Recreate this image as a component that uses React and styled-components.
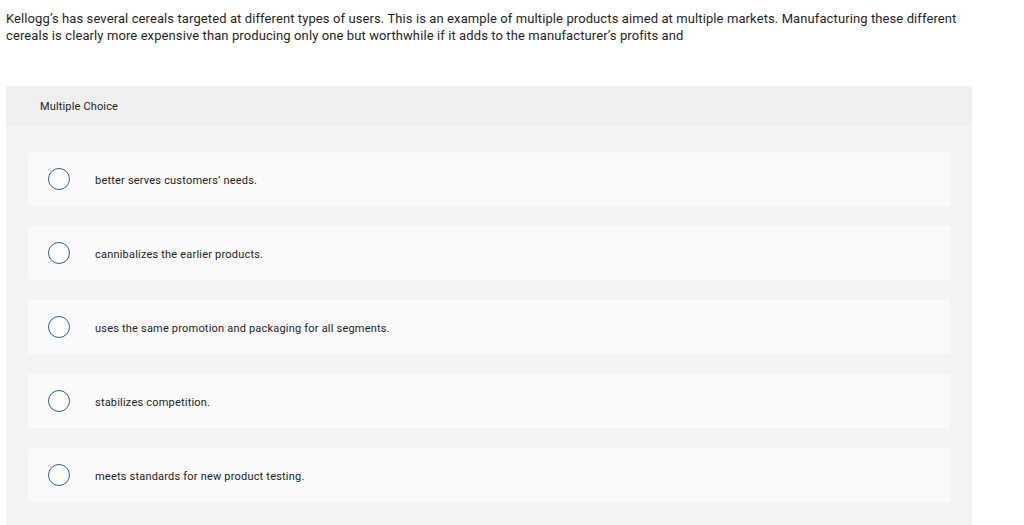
import React from 'react';
import styled, { createGlobalStyle } from 'styled-components';

const GlobalStyle = createGlobalStyle`
  html, body {
    margin: 0;
    padding: 0;
    background: #ffffff;
  }
  body {
    font-family: Roboto, "Liberation Sans", sans-serif;
    color: #222222;
  }
`;

const Page = styled.div`
  padding: 10px 6px 0 6px;
`;

const Question = styled.p`
  margin: 0;
  font-size: 13px;
  line-height: 17px;
  letter-spacing: 0.1px;
  color: #1f1f1f;
  max-width: 960px;
`;

const Panel = styled.section`
  margin-top: 42px;
  width: 966px;
  background: #f4f4f4;
  border-radius: 3px 3px 0 0;
  padding-bottom: 24px;
`;

const PanelHeader = styled.div`
  height: 40px;
  display: flex;
  align-items: center;
  padding-left: 34px;
  background: #efefef;
  border-radius: 3px 3px 0 0;
  font-size: 11px;
  letter-spacing: 0.15px;
  color: #222222;
`;

const OptionList = styled.div`
  display: flex;
  flex-direction: column;
  gap: 20px;
  padding: 26px 22px 0 22px;
`;

const Option = styled.label`
  display: flex;
  align-items: center;
  height: 54px;
  background: #fafafa;
  border-radius: 3px;
  cursor: pointer;
`;

const Radio = styled.span`
  width: 20px;
  height: 20px;
  margin-left: 20px;
  border: 1px solid #2c5d9b;
  border-radius: 50%;
  background: #ffffff;
  flex-shrink: 0;
`;

const OptionText = styled.span`
  margin-left: 25px;
  padding-top: 2px;
  font-size: 11px;
  letter-spacing: 0.2px;
  color: #222222;
`;

const options = [
  'better serves customers’ needs.',
  'cannibalizes the earlier products.',
  'uses the same promotion and packaging for all segments.',
  'stabilizes competition.',
  'meets standards for new product testing.',
];

export default function App() {
  return (
    <Page>
      <GlobalStyle />
      <Question>
        Kellogg’s has several cereals targeted at different types of users. This is an example of multiple products aimed at multiple markets. Manufacturing these different cereals is clearly more expensive than producing only one but worthwhile if it adds to the manufacturer’s profits and
      </Question>
      <Panel>
        <PanelHeader>Multiple Choice</PanelHeader>
        <OptionList>
          {options.map((o) => (
            <Option key={o}>
              <Radio />
              <OptionText>{o}</OptionText>
            </Option>
          ))}
        </OptionList>
      </Panel>
    </Page>
  );
}
